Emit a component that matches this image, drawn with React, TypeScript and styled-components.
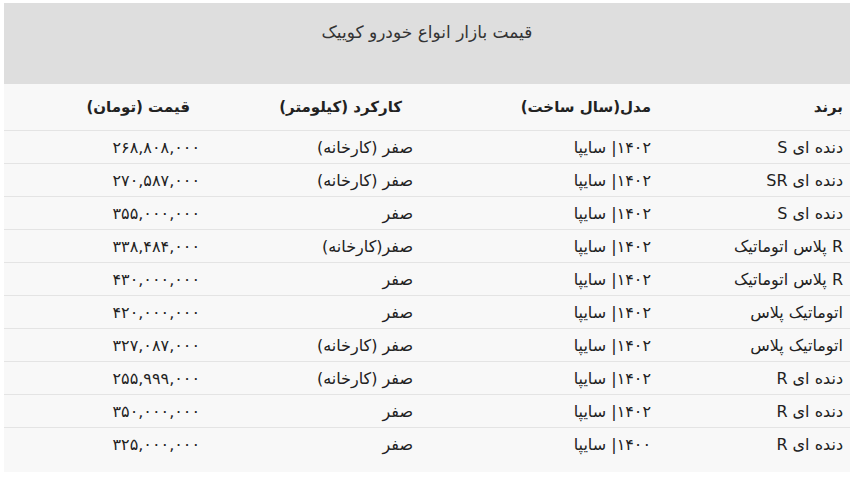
import * as React from "react"
import styled, {createGlobalStyle} from "styled-components";

const GlobalStyle = createGlobalStyle`
  body {
    margin: 0;
    padding: 3px 4px;
    background: #ffffff;
    font-family: "DejaVu Sans", "Noto Sans", sans-serif;
    color: #222;
  }
`;

const cols = "192px 238px 213px 1fr";

let rows = [
    ["دنده ای S", "۱۴۰۲| سایپا", "صفر (کارخانه)", "۲۶۸,۸۰۸,۰۰۰"],
    ["دنده ای SR", "۱۴۰۲| سایپا", "صفر (کارخانه)", "۲۷۰,۵۸۷,۰۰۰"],
    ["دنده ای S", "۱۴۰۲| سایپا", "صفر", "۳۵۵,۰۰۰,۰۰۰"],
    ["R پلاس اتوماتیک", "۱۴۰۲| سایپا", "صفر(کارخانه)", "۳۳۸,۴۸۴,۰۰۰"],
    ["R پلاس اتوماتیک", "۱۴۰۲| سایپا", "صفر", "۴۳۰,۰۰۰,۰۰۰"],
    ["اتوماتیک پلاس", "۱۴۰۲| سایپا", "صفر", "۴۲۰,۰۰۰,۰۰۰"],
    ["اتوماتیک پلاس", "۱۴۰۲| سایپا", "صفر (کارخانه)", "۳۲۷,۰۸۷,۰۰۰"],
    ["دنده ای R", "۱۴۰۲| سایپا", "صفر (کارخانه)", "۲۵۵,۹۹۹,۰۰۰"],
    ["دنده ای R", "۱۴۰۲| سایپا", "صفر", "۳۵۰,۰۰۰,۰۰۰"],
    ["دنده ای R", "۱۴۰۰| سایپا", "صفر", "۳۲۵,۰۰۰,۰۰۰"],
]
// header titles and how far each sits in from its column's edge
let heads = ["برند", "مدل(سال ساخت)", "کارکرد (کیلومتر)", "قیمت (تومان)"]
let headInset = [7, 7, 18, 17]

const Table = styled.div`
  direction: rtl;
  background: #f8f8f8;
  padding-bottom: 11px;
`;

const Caption = styled.div`
  background: #dedede;
  height: 81px;
  padding-top: 19px;
  box-sizing: border-box;
  text-align: center;
  font-size: 17px;
  color: #333;
`;

const Row = styled.div<{head?: boolean}>`
  display: grid;
  grid-template-columns: ${cols};
  height: ${props => props.head ? "47px" : "33px"};
  align-items: center;
  border-bottom: 1px solid #e4e4e4;
  box-sizing: border-box;
  font-weight: ${props => props.head ? "bold" : "normal"};
  font-size: ${props => props.head ? "15px" : "16px"};
  &:last-child { border-bottom: none; }
`;

const Cell = styled.div<{inset?: number}>`
  padding: 0 ${props => props.inset ?? 7}px 0 7px;
  white-space: nowrap;
`;

const CarPrices: React.FC = () => {
    return (
        <>
            <GlobalStyle/>
            <Table>
                <Caption>قیمت بازار انواع خودرو کوییک</Caption>
                <Row head>
                    {heads.map((h, i) => <Cell key={i} inset={headInset[i]}>{h}</Cell>)}
                </Row>
                {rows.map((r, index) => (
                    <Row key={index}>
                        {r.map((c, i) => <Cell key={i}>{c}</Cell>)}
                    </Row>
                ))}
            </Table>
        </>
    )
}

export default CarPrices
